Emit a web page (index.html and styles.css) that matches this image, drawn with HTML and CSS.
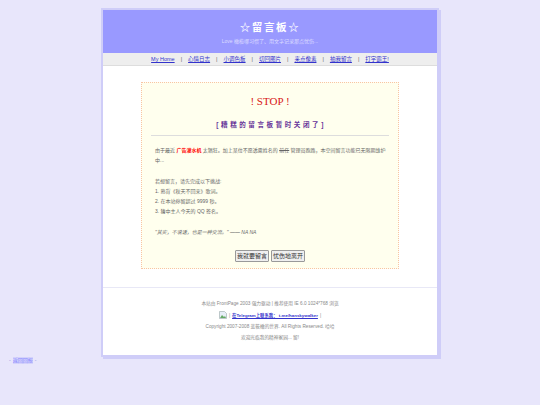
FILE: index.html
```html
<!DOCTYPE html>
<html lang="zh">
<head>
<meta charset="utf-8">
<title>留言板</title>
<link rel="stylesheet" href="styles.css">
</head>
<body>
<div class="page">
  <header class="banner">
    <h1>☆留言板☆</h1>
    <p>Love 橄榄哪习惯了、用文字记录那点忧伤...</p>
  </header>
  <nav class="nav">
    <a href="#">My Home</a><span>|</span>
    <a href="#">心情日志</a><span>|</span>
    <a href="#">小调色板</a><span>|</span>
    <a href="#">切回图片</a><span>|</span>
    <a href="#">来点像素</a><span>|</span>
    <a href="#">抽我留言</a><span>|</span>
    <a href="#">打字霸王!</a>
  </nav>
  <main class="content">
    <section class="notice">
      <h2>! STOP !</h2>
      <h3>[ 糟 糕 的 留 言 板 暂 时 关 闭 了 ]</h3>
      <hr>
      <div class="body">
        <p>由于最近 <b class="hot">广告灌水机</b> 太猖狂。加上某位不愿透露姓名的 <s>前任</s> 管理员跑路，本空间留言功能已无限期维护中...</p>
        <p class="gap">若想留言，请先完成以下挑战:</p>
        <p>1. 熟背《秋天不回来》歌词。</p>
        <p>2. 在本站停留超过 9999 秒。</p>
        <p>3. 猜中主人今天的 QQ 签名。</p>
        <p class="gap quote">"其实，不说话，也是一种交流。" —— NA NA</p>
      </div>
      <div class="actions">
        <button type="button">我就要留言</button>
        <button type="button">忧伤地离开</button>
      </div>
    </section>
  </main>
  <footer class="foot">
    <p>本站由 FrontPage 2003 强力驱动 | 推荐使用 IE 6.0 1024*768 浏览</p>
    <p class="tg">
      <svg class="broken" viewBox="0 0 8 8" width="8" height="8"><path d="M.5.5h5l2 2v5h-7z" fill="#e8eef8" stroke="#9aa" stroke-width=".6"/><path d="M1 7l2-3 2 2 1-1 1 2z" fill="#6a6"/></svg>
      <span>|</span> <a href="#">在Telegram上联系我： t.me/hanskywalker</a> <span>|</span>
    </p>
    <p>Copyright 2007-2008 蓝筱橄的世界. All Rights Reserved. 哈哈</p>
    <p>欢迎光临我的精神家园... 留!</p>
  </footer>
</div>
<a class="back" href="#"><span>-</span> <b>返回回报</b> <span>-</span></a>
</body>
</html>
```
FILE: styles.css
```css
html, body { margin: 0; padding: 0; }
body {
  background: #e8e6fb;
  font-family: "Liberation Sans", "Noto Sans CJK SC", sans-serif;
  font-size: 5px;
  color: #555;
  height: 405px;
  overflow: hidden;
}
.page {
  box-sizing: border-box;
  width: 338px;
  height: 349px;
  margin: 8px 0 0 101px;
  background: #fff;
  border: 2px solid #cfcdf8;
  box-shadow: 2px 2px 0 #cfcdf8;
}
.banner {
  background: #9999ff;
  height: 43px;
  box-sizing: border-box;
  padding-top: 10px;
  text-align: center;
  color: #fff;
}
.banner h1 {
  margin: 0;
  font-size: 10.5px;
  line-height: 14px;
  font-weight: bold;
  letter-spacing: 1.6px;
}
.banner p { margin: 4px 0 0; font-size: 5px; line-height: 7px; color: #dcdcff; }
.nav {
  height: 13px;
  box-sizing: border-box;
  background: #eee;
  border-bottom: 1px solid #ddd;
  display: flex;
  justify-content: center;
  align-items: center;
  gap: 6px;
  font-size: 5.5px;
  color: #666;
}
.nav a { color: #33c; }
.content { padding: 16px 38px 0; }
.notice {
  box-sizing: border-box;
  height: 187px;
  background: #ffffee;
  border: 1px dotted #f8c4a4;
  padding: 0 9px;
}
.notice h2 {
  margin: 12px 0 0;
  font: normal 11px/12px "Liberation Serif", "Noto Sans CJK SC", serif;
  color: #d81818;
  text-align: center;
}
.notice h3 {
  margin: 13px 0 0;
  font-size: 6.5px;
  line-height: 9px;
  letter-spacing: .4px;
  color: #663399;
  text-align: center;
}
.notice hr {
  margin: 6px 0 9px;
  border: 0;
  height: 1px;
  background: #ddd;
}
.body { padding: 0 1px 0 4px; }
.notice p { margin: 0; line-height: 10.3px; color: #666; }
.notice .gap { margin-top: 10px; }
.notice .quote { font-style: italic; }
.notice .hot { color: #f00; }
.actions {
  margin-top: 13px;
  display: flex;
  justify-content: center;
  gap: 2px;
}
.actions button {
  font: 6px/8px "Liberation Sans", "Noto Sans CJK SC", sans-serif;
  color: #333;
  background: #efefef;
  border: 1px solid #999;
  border-radius: 1px;
  padding: 1px;
}
.foot {
  margin-top: 18px;
  border-top: 1px solid #e8e8f6;
  padding-top: 12px;
  text-align: center;
  color: #888;
  font-size: 4.7px;
}
.foot p { margin: 0 0 4px; line-height: 7px; }
.foot .tg { display: flex; justify-content: center; align-items: center; gap: 2px; }
.foot a { color: #33c; font-weight: bold; font-size: 4.4px; }
.back {
  position: absolute;
  left: 9px;
  top: 357px;
  color: #8e8ee0;
  text-decoration: none;
  font-size: 5px;
  line-height: 7px;
  display: flex;
  gap: 2px;
}
.back b { color: #8888ff; background: #d4d2fb; font-weight: normal; }
```
